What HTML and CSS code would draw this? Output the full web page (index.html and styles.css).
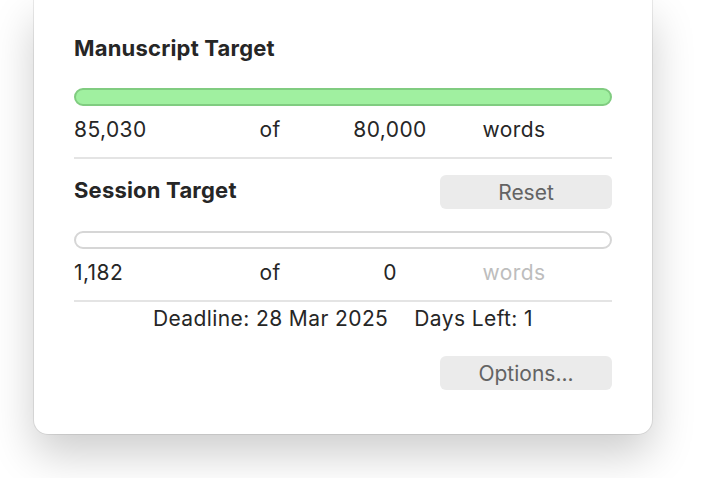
FILE: index.html
```html
<!DOCTYPE html>
<html lang="en">
<head>
    <meta charset="UTF-8">
    <meta name="viewport" content="width=device-width, initial-scale=1.0">
    <title>Project Targets</title>
    <link rel="stylesheet" href="styles.css">
</head>
<body>
    <div class="window">
        <h2 class="title">Manuscript Target</h2>
        <div class="bar bar-full"></div>
        <div class="count-row">
            <span class="count">85,030</span>
            <span class="of">of</span>
            <span class="goal">80,000</span>
            <span class="unit">words</span>
        </div>

        <div class="section-head">
            <h2 class="title">Session Target</h2>
            <button class="btn">Reset</button>
        </div>
        <div class="bar"></div>
        <div class="count-row">
            <span class="count">1,182</span>
            <span class="of">of</span>
            <span class="goal">0</span>
            <span class="unit muted">words</span>
        </div>

        <div class="deadline">
            <span>Deadline: 28 Mar 2025</span>
            <span>Days Left: 1</span>
        </div>
        <div class="footer">
            <button class="btn">Options...</button>
        </div>
    </div>
</body>
</html>
```

FILE: styles.css
```css
html, body { height: 100%; }
body { margin: 0; background: #ffffff; font-family: Inter, "Noto Sans", sans-serif; color: #262626; }
.window { width: 618px; margin-left: 34px; padding: 36px 40px 44px; box-sizing: border-box; background: #fff; border-radius: 0 0 14px 14px; box-shadow: 0 0 0 1px rgba(0,0,0,0.08), 0 20px 44px rgba(0,0,0,0.2); }
.title { margin: 0; font-size: 22px; font-weight: 700; line-height: 24px; color: #262626; letter-spacing: 0.2px; }
.bar { height: 18px; margin-top: 22px; border: 2px solid #d6d6d6; border-radius: 9px; box-sizing: border-box; background: #fff; }
.bar-full { margin-top: 28px; background: #a0f0a0; border-color: #80cc80; }
.count-row { display: grid; grid-template-columns: 156px 80px 160px 88px; align-items: center; line-height: 24px; margin-top: 12px; padding-bottom: 15px; border-bottom: 2px solid #e4e4e4; font-size: 21px; letter-spacing: 0.4px; }
.count-row .of, .count-row .goal, .count-row .unit { text-align: center; }
.muted { color: #bdbdbd; }
.section-head { display: flex; justify-content: space-between; align-items: center; margin-top: 16px; }
.section-head .title { margin-top: -4px; }
.btn { width: 172px; height: 34px; border: none; border-radius: 6px; background: #ebebeb; color: #636363; font-family: inherit; font-size: 21px; padding: 0; }
.deadline { display: flex; justify-content: center; gap: 26px; margin-top: 5px; font-size: 21px; line-height: 24px; letter-spacing: 0.4px; }
.footer { display: flex; justify-content: flex-end; margin-top: 25px; }
```
